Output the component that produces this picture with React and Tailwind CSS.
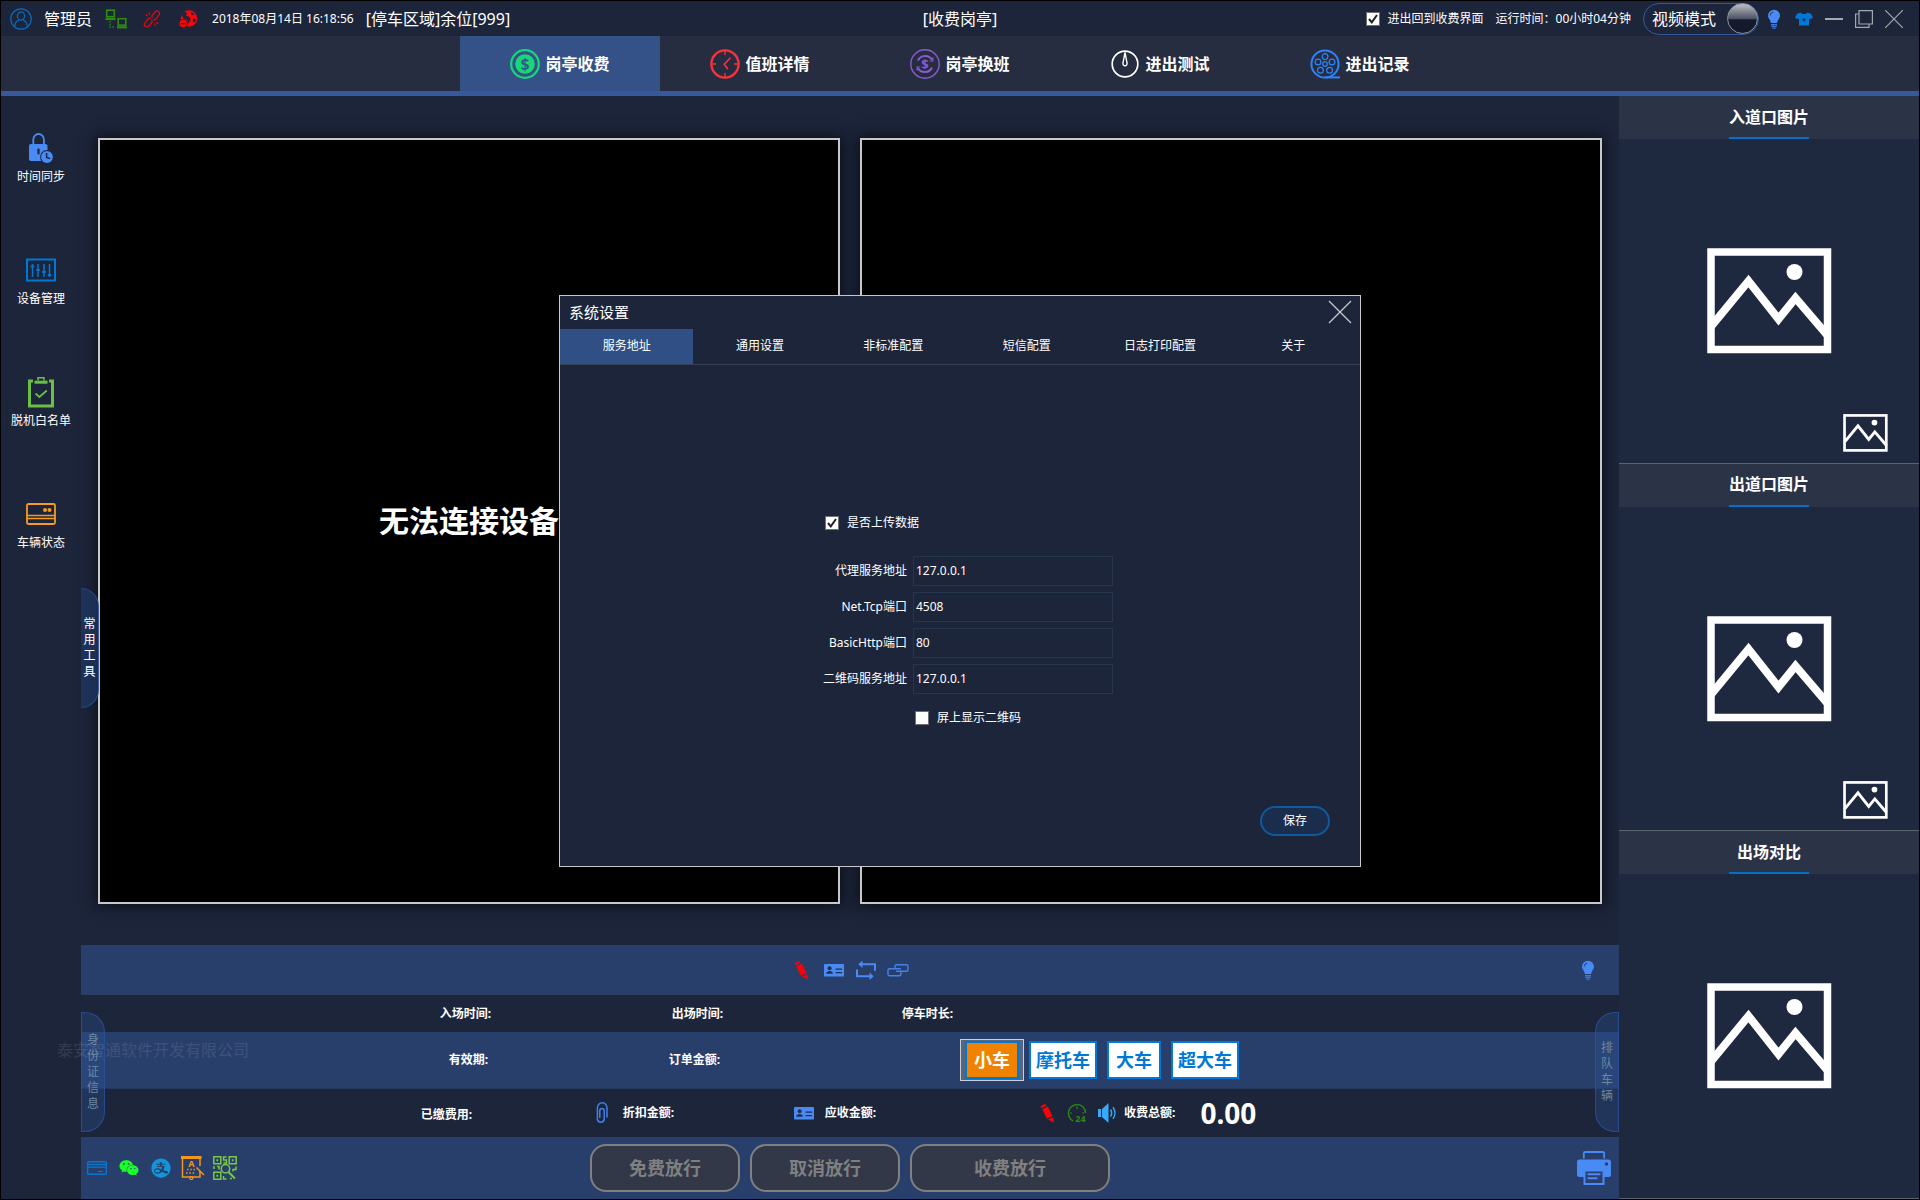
import { useState } from 'react';
import { AiFillAlipayCircle } from 'react-icons/ai';
import { FaWeixin } from 'react-icons/fa';

const NAV_ITEMS = [
  { label: '岗亭收费', icon: CoinIcon },
  { label: '值班详情', icon: ClockIcon },
  { label: '岗亭换班', icon: ShiftIcon },
  { label: '进出测试', icon: GaugeIcon },
  { label: '进出记录', icon: ReelIcon },
];

const TOOLS = [
  { label: '时间同步', icon: LockClockIcon },
  { label: '设备管理', icon: SlidersIcon },
  { label: '脱机白名单', icon: ClipboardIcon },
  { label: '车辆状态', icon: ServerIcon },
];

const CAR_TYPES = ['小车', '摩托车', '大车', '超大车'];

const SETTING_TABS = ['服务地址', '通用设置', '非标准配置', '短信配置', '日志打印配置', '关于'];

const FIELDS = [
  { id: 'proxy', label: '代理服务地址', value: '127.0.0.1' },
  { id: 'tcp', label: 'Net.Tcp端口', value: '4508' },
  { id: 'http', label: 'BasicHttp端口', value: '80' },
  { id: 'qrcode', label: '二维码服务地址', value: '127.0.0.1' },
];

/* ---------- Icons ---------- */

function UserIcon() {
  return (
    <svg viewBox="0 0 22 22" className="size-[22px]" fill="none" stroke="#0d6ab8" strokeWidth="1.2">
      <circle cx="11" cy="11" r="10.2" />
      <ellipse cx="11" cy="8" rx="3.6" ry="4.2" />
      <path d="M4.8 18.5c0-4 2-5.6 4.4-6.6M17.2 18.5c0-4-2-5.6-4.4-6.6" />
    </svg>
  );
}

function NetworkIcon() {
  return (
    <svg viewBox="0 0 24 20" className="h-5 w-6" fill="none" stroke="#2f8a10" strokeWidth="1.6">
      <rect x="2.7" y="1.2" width="7.6" height="6.500" />
      <path d="M1.500 10h10" strokeWidth="2.200" />
      <rect x="14.2" y="9.700" width="7.6" height="6.500" />
      <path d="M13 18.300h10" strokeWidth="2.200" />
      <path d="M6 12v6h5" strokeDasharray="1.4 1.4" strokeWidth="1.300" />
    </svg>
  );
}

function BrokenLinkIcon() {
  return (
    <svg viewBox="0 0 24 20" className="h-5 w-6" fill="none" stroke="#e8040c" strokeWidth="1.3" strokeLinecap="round">
      <path d="M12.500 8.500l-.8-1.500 3.400-4a2.500 2.500 0 0 1 3.900 3.200L16 10a2.400 2.400 0 0 1-2.400.6" />
      <path d="M11.500 11.500l.8 1.500-3.400 4a2.500 2.500 0 0 1-3.900-3.200L8 10a2.400 2.400 0 0 1 2.400-.6" />
      <path d="M7.300 6.700L6 5.600M9.400 5.400L9 4M16.500 13.500l1.500 1M14.800 15l.3 1.300" />
    </svg>
  );
}

function GlobeIcon() {
  return (
    <svg viewBox="0 0 24 20" className="h-5 w-6">
      <circle cx="13" cy="9.5" r="8.3" fill="#fb0505" />
      <path d="M8 2.5l3 1.3-1 3 3 .8 1.6 3-2 3.8-1.5-3.6-3.6-1.2L5.6 6zM15.5 3l3 2.2-2.4 1-1.4-1.4zM17.5 9.2l2.7 1.5-2 3-1.6-1.6z" fill="#1d253a" />
      <circle cx="7.2" cy="14.6" r="4.6" fill="#1d253a" />
      <circle cx="7.2" cy="14.6" r="3.8" fill="#fb0505" />
      <path d="M4.8 14.6h4.8" stroke="#1d253a" strokeWidth="1.3" />
    </svg>
  );
}

function CoinIcon() {
  return (
    <svg viewBox="0 0 30 30" className="size-[30px]">
      <circle cx="15" cy="15" r="13.8" fill="none" stroke="#18d777" strokeWidth="2.2" />
      <circle cx="15" cy="15" r="9.8" fill="#18d777" />
      <text x="15" y="20.600" textAnchor="middle" fontSize="16" fontWeight="600" fill="#36538a">$</text>
    </svg>
  );
}

function ClockIcon() {
  return (
    <svg viewBox="0 0 30 30" className="size-[30px]" fill="none" stroke="#f9313b">
      <circle cx="15" cy="15" r="13.6" strokeWidth="2.4" />
      <path d="M15 2v4M15 24v4M2 15h4M24 15h4" strokeWidth="1.4" />
      <path d="M20.5 8.8L14.2 15.2l3.6 4.8" strokeWidth="1.6" />
    </svg>
  );
}

function ShiftIcon() {
  return (
    <svg viewBox="0 0 30 30" className="size-[30px]" fill="none" stroke="#8a5bd0">
      <circle cx="15" cy="15" r="14.2" strokeWidth="1.4" />
      <path d="M8 11.500a8 8 0 0 1 14-.8M22 18.500a8 8 0 0 1-14 .8" strokeWidth="2" />
      <path d="M22.800 8.500v3.500h-3M7.200 21.500V18h3" strokeWidth="1.200" />
      <text x="15" y="19.600" textAnchor="middle" fontSize="13" fontWeight="700" fill="#8a5bd0" stroke="none">$</text>
    </svg>
  );
}

function GaugeIcon() {
  return (
    <svg viewBox="0 0 30 30" className="size-[30px]" fill="none" stroke="#fff">
      <circle cx="15" cy="15" r="12.8" strokeWidth="1.7" />
      <path d="M15 3.500l-2 10.300a2.100 2.300 0 1 0 4 0z" strokeWidth="1.4" />
    </svg>
  );
}

function ReelIcon() {
  return (
    <svg viewBox="0 0 30 30" className="size-[30px]" fill="none" stroke="#2d84fb">
      <circle cx="15" cy="15" r="13.600" strokeWidth="2" />
      <path d="M15 28.400h15" strokeWidth="2" />
      <g strokeWidth="1.200">
        <circle cx="15" cy="7.600" r="2.900" />
        <circle cx="22" cy="13" r="2.900" />
        <circle cx="19.600" cy="21.200" r="2.900" />
        <circle cx="10.400" cy="21.200" r="2.900" />
        <circle cx="8" cy="13" r="2.900" />
        <circle cx="15" cy="15" r="2.300" />
      </g>
    </svg>
  );
}

function BulbIcon() {
  return (
    <svg viewBox="0 0 14 20" className="h-5 w-3.5">
      <path d="M7 .8a6 6 0 0 0-6 6c0 2.500 2.300 4 3 7.200h6c.7-3.200 3-4.700 3-7.200a6 6 0 0 0-6-6z" fill="#4a8af5" />
      <path d="M3.200 6.500a4 4 0 0 1 3-3.500" stroke="#243a66" strokeWidth="1" fill="none" />
      <path d="M4 15.600h6M4.200 17.400h5.600M5.300 19.200h3.400" stroke="#3b78de" strokeWidth="1.200" />
    </svg>
  );
}

function ShirtIcon() {
  return (
    <svg viewBox="0 0 18 14" className="h-3.5 w-[18px]">
      <path d="M5.500.5c1.500 2 5.500 2 7 0l3.500 1.300L18 5.800l-3.300 1.500L14 6.400V13.500H4V6.400l-.7.900L0 5.800l2-4z" fill="#0078d7" />
      <path d="M7.300 7.800h3.400M9 6.100v3.400" stroke="#1d253a" strokeWidth="1.100" />
    </svg>
  );
}

function LockClockIcon() {
  return (
    <svg viewBox="0 0 24 30" className="h-[30px] w-6">
      <path d="M4.300 12V6.800a5.300 5.800 0 0 1 10.600 0V12" fill="none" stroke="#4a8af5" strokeWidth="1.800" />
      <rect x="0" y="11" width="18.500" height="17" rx="2" fill="#4a8af5" />
      <path d="M9.500 16.500v4" stroke="#1d253a" strokeWidth="2.200" strokeLinecap="round" />
      <ellipse cx="18" cy="24" rx="6.900" ry="6.900" fill="#1d253a" />
      <ellipse cx="18" cy="24" rx="5.900" ry="5.900" fill="#4a8af5" />
      <path d="M17.600 20v4.400l3.600 1.200" fill="none" stroke="#1d253a" strokeWidth="1.500" />
    </svg>
  );
}

function SlidersIcon() {
  return (
    <svg viewBox="0 0 30 24" className="h-6 w-[30px]" fill="none" stroke="#0078d7">
      <rect x="1" y="1.500" width="28" height="21" strokeWidth="2" />
      <path d="M6.500 6v13M12 6v13M18 6v13M23.500 6v13" strokeWidth="1.500" />
      <path d="M4.700 8.500h3.600M10.200 12h3.600M16.200 14h3.600M21.700 17h3.600" strokeWidth="2.200" />
    </svg>
  );
}

function ClipboardIcon() {
  return (
    <svg viewBox="0 0 26 32" className="h-8 w-[26px]" fill="none" stroke="#6cbf45">
      <path d="M5 5H1.500V30H24.500V5H21" strokeWidth="3" />
      <path d="M6.500 6.200h13" strokeWidth="3" />
      <path d="M10 4.500V1.800h6v2.700" strokeWidth="1.500" />
      <path d="M7.500 17.500l3.800 3.500 7.500-6.500" strokeWidth="1.700" />
    </svg>
  );
}

function ServerIcon() {
  return (
    <svg viewBox="0 0 30 22" className="h-[22px] w-[30px]" fill="none" stroke="#f79a20">
      <rect x="1" y="1" width="28" height="20" rx="1.500" strokeWidth="1.800" />
      <path d="M1 12.400h28M1 15.600h28" strokeWidth="1.500" />
      <circle cx="19" cy="7" r="2" fill="#f79a20" stroke="none" />
      <circle cx="23.500" cy="7" r="2" fill="#f79a20" stroke="none" />
    </svg>
  );
}

function PictureIcon({ className }) {
  return (
    <svg viewBox="0 0 125 106" className={className} fill="none" stroke="#fff">
      <rect x="4" y="4" width="116.500" height="97.500" strokeWidth="7.500" />
      <path d="M4 78.500L41.500 33l30 38 17-21L121 88" strokeWidth="8" />
      <circle cx="87.500" cy="24" r="8" fill="#fff" stroke="none" />
    </svg>
  );
}

function PencilIcon() {
  return (
    <svg viewBox="0 0 24 20" className="h-5 w-6" fill="#fc0004">
      <path d="M4.500 3.200L9.300.8l1 2L5.600 5.200z" />
      <path d="M6.200 6.300l5.600-2.800 4.700 9.400-5.600 2.800z" />
      <path d="M12 16.600l5.300-2.400.6 5.300z" />
    </svg>
  );
}

function IdCardIcon() {
  return (
    <svg viewBox="0 0 24 20" className="h-5 w-6">
      <rect x="2" y="4" width="20" height="12.500" rx=".8" fill="#4a8af5" />
      <circle cx="7.600" cy="8.200" r="2" fill="#20304f" />
      <path d="M4.300 13.700c0-2 1.500-2.800 3.300-2.800s3.300.8 3.300 2.800z" fill="#20304f" />
      <path d="M13.500 9.200h6.700M13.500 12.700h6.700" stroke="#20304f" strokeWidth="1.300" />
    </svg>
  );
}

function SwapIcon() {
  return (
    <svg viewBox="0 0 24 20" className="h-5 w-6" fill="none" stroke="#4a8af5" strokeWidth="2">
      <path d="M7 4.200h14v6.500M17 16.300H3V9.500" />
      <path d="M8.500.5v7.400L4.300 4.200zM15.500 12.600V20l4.200-3.700z" fill="#4a8af5" stroke="none" />
    </svg>
  );
}

function ChainIcon() {
  return (
    <svg viewBox="0 0 24 20" className="h-5 w-6" fill="none" stroke="#4583ea" strokeWidth="1.400">
      <path d="M9 8.500V6.200A1.500 1.500 0 0 1 10.500 4.700h10A1.500 1.500 0 0 1 22 6.200v3.600a1.500 1.500 0 0 1-1.500 1.500H10" />
      <path d="M15 11.500v2.800a1.500 1.500 0 0 1-1.500 1.500h-10A1.500 1.500 0 0 1 2 14.300v-4a1.500 1.500 0 0 1 1.500-1.500H15" />
    </svg>
  );
}

function PaperclipIcon() {
  return (
    <svg viewBox="0 0 12 22" className="h-[22px] w-3" fill="none" stroke="#3f80ee" strokeWidth="1.500">
      <path d="M3.800 16V9a2.200 2.400 0 0 1 4.400 0v8.500a3.500 3.500 0 0 1-6.800 0V6a4.600 5 0 0 1 9.600 0v9.500" />
    </svg>
  );
}

function Clock24Icon() {
  return (
    <svg viewBox="0 0 24 20" className="h-5 w-6" fill="none" stroke="#2e8a12" strokeWidth="1.400">
      <path d="M8 17.800A8.600 8.600 0 1 1 20.600 10" />
      <path d="M12 3.500v2.500M5 10h2M17 10h2" strokeWidth="1.100" />
      <text x="15.500" y="18.500" textAnchor="middle" fontSize="9" fontWeight="700" fill="#2e8a12" stroke="none">24</text>
    </svg>
  );
}

function SpeakerIcon() {
  return (
    <svg viewBox="0 0 18 20" className="h-5 w-[18px]">
      <path d="M0 6h3v8H0zM4 6l6.500-6v20L4 14z" fill="#38a9fb" />
      <path d="M12.500 6.500c1.300 2 1.300 5 0 7M15 4.200c2.500 3.400 2.500 8.200 0 11.600" fill="none" stroke="#38a9fb" strokeWidth="1.500" />
    </svg>
  );
}

function BankCardIcon() {
  return (
    <svg viewBox="0 0 20 14" className="h-3.5 w-5" fill="none" stroke="#0b74ce">
      <rect x=".7" y=".7" width="18.600" height="12.600" rx="1" strokeWidth="1.400" />
      <path d="M1 3.500h18M1 6.200h18" strokeWidth="1.300" />
      <path d="M11 10.500h5" strokeWidth="1.200" />
    </svg>
  );
}

function BoardIcon() {
  return (
    <svg viewBox="0 0 24 24" className="size-6" fill="none" stroke="#f4971f">
      <path d="M0 1.500h20.500" strokeWidth="3" />
      <path d="M1.500 3v18h17.500v-6M19 3v7" strokeWidth="1.500" />
      <path d="M15.500 11.500l7.500 7.500" strokeWidth="1.500" />
      <path d="M6 13.500h8M5 17h9" strokeWidth="1.500" strokeDasharray="1.500 1.800" />
      <circle cx="10.300" cy="22" r="1.500" strokeWidth="1.200" />
      <text x="10.300" y="11.300" textAnchor="middle" fontSize="9" fontWeight="700" fill="#f4971f" stroke="none">A</text>
    </svg>
  );
}

function QrIcon() {
  return (
    <svg viewBox="0 0 24 24" className="size-6" fill="none" stroke="#7ac943" strokeWidth="1.500">
      <path d="M.8.8h7v7h-7zM16.200.8h7v7h-7zM.8 16.200h7v7h-7z" />
      <path d="M3.400 4.300h1.800M18.800 4.300h1.800M3.400 19.700h1.800" strokeWidth="2" />
      <path d="M13.500 1h-3v3h3v3h-3M1 10v3M4 10.500h2v3M23 10.500v3h-3v2M10.500 20v3h3M17 22.500h2" />
      <circle cx="12.500" cy="12.800" r="4.200" />
      <path d="M15.500 16l6.500 6.500" strokeWidth="2" />
    </svg>
  );
}

function PrinterIcon() {
  return (
    <svg viewBox="0 0 34 34" className="size-[34px]">
      <path d="M6.800 7.500V2.500A1.500 1.500 0 0 1 8.300 1h17.400a1.500 1.500 0 0 1 1.500 1.500v5" fill="none" stroke="#4a8af5" strokeWidth="1.800" />
      <rect x="0" y="8.500" width="34" height="17.500" rx="2.500" fill="#4a8af5" />
      <circle cx="29.500" cy="13" r="1.700" fill="#283e6b" />
      <path d="M7.500 19.500h19V33h-19z" fill="#283e6b" stroke="#4a8af5" strokeWidth="2" />
      <path d="M10.500 23.300h13M10.500 27.300h10" stroke="#4a8af5" strokeWidth="2" />
    </svg>
  );
}

/* ---------- Shared parts ---------- */

function CheckBox({ id, label, defaultChecked }) {
  return (
    <label htmlFor={id} className="flex items-center gap-2 text-xs">
      <span className="relative size-3.5">
        <input
          id={id}
          type="checkbox"
          defaultChecked={defaultChecked}
          className="peer block size-3.5 appearance-none border border-[#707070] bg-white"
        />
        <svg
          viewBox="0 0 14 14"
          className="pointer-events-none absolute inset-0 size-3.5 opacity-0 peer-checked:opacity-100"
          fill="none"
          stroke="#212121"
          strokeWidth="2"
        >
          <path d="M3 7l2.800 3.300L11 3" />
        </svg>
      </span>
      {label}
    </label>
  );
}

function IconButton({ label, children }) {
  return (
    <button aria-label={label} className="flex h-6 w-6 items-center justify-center">
      {children}
    </button>
  );
}

function FieldLabel({ children }) {
  return <span className="text-xs font-bold">{children}</span>;
}

/* ---------- Page sections ---------- */

function TitleBar() {
  const controls = 'flex h-full w-[30px] items-center justify-center';

  return (
    <header className="grid h-[35px] grid-cols-[1fr_auto_1fr] items-center">
      <div className="flex items-center gap-3 pl-[9px]">
        <UserIcon />
        <span>管理员</span>
        <NetworkIcon />
        <BrokenLinkIcon />
        <GlobeIcon />
        <span className="text-xs">2018年08月14日 16:18:56</span>
        <span>[停车区域]余位[999]</span>
      </div>
      <h1>[收费岗亭]</h1>
      <div className="flex h-full items-center justify-end pr-[10px]">
        <CheckBox id="back" label="进出回到收费界面" defaultChecked />
        <span className="mx-3 text-xs">运行时间：00小时04分钟</span>
        <button
          role="switch"
          aria-checked="true"
          className="flex h-8 w-[116px] items-center justify-between rounded-full border border-[#35599c] pl-2"
        >
          视频模式
          <span className="size-[31px] rounded-full border border-[#8d93a0] bg-linear-to-b from-[#b4b7be] from-5% via-[#4f5566] via-50% to-[#141a2b] to-55%" />
        </button>
        <button aria-label="提示" className={controls}><BulbIcon /></button>
        <button aria-label="皮肤" className={controls}><ShirtIcon /></button>
        <button aria-label="最小化" className={controls}>
          <svg viewBox="0 0 18 18" className="size-[18px]" stroke="#a4a8b0" strokeWidth="2"><path d="M0 9h18" /></svg>
        </button>
        <button aria-label="还原" className={controls}>
          <svg viewBox="0 0 18 18" className="size-[18px]" fill="none" stroke="#a4a8b0" strokeWidth="1.200">
            <path d="M4 .6h13.400V14H4zM4 4H.6v13.400H14V14" />
          </svg>
        </button>
        <button aria-label="关闭" className={controls}>
          <svg viewBox="0 0 18 18" className="size-[18px]" stroke="#a4a8b0" strokeWidth="1.200"><path d="M0 0l18 18M18 0L0 18" /></svg>
        </button>
      </div>
    </header>
  );
}

function MainNav() {
  const [active, setActive] = useState(0);

  return (
    <nav className="flex justify-center border-b-[5px] border-[#35599c] bg-[#272d41]">
      {NAV_ITEMS.map(({ label, icon: Icon }, i) => (
        <button
          key={label}
          onClick={() => setActive(i)}
          className={`flex h-[55px] w-[200px] items-center justify-center gap-[5px] font-bold ${i === active ? 'bg-[#345188]' : ''}`}
        >
          <Icon />
          {label}
        </button>
      ))}
    </nav>
  );
}

function ToolBar() {
  return (
    <aside className="relative w-20 shrink-0 pt-9">
      <div className="flex flex-col gap-[67px]">
        {TOOLS.map(({ label, icon: Icon }) => (
          <button key={label} className="flex flex-col items-center gap-[3px] text-xs leading-5">
            <span className="flex h-8 items-center"><Icon /></span>
            {label}
          </button>
        ))}
      </div>
      {/* Drawer handle, hangs over the video area */}
      <button className="absolute top-[492px] left-full z-10 flex h-[120px] w-[18px] items-center justify-center rounded-r-full border border-l-0 border-[#2a5298]/70 bg-[#1f3c70]/60 text-xs leading-4">
        <span className="w-3 break-all">常用工具</span>
      </button>
    </aside>
  );
}

function VideoArea() {
  const box = 'flex flex-1 items-center justify-center border-2 border-[#c8c8c8] bg-black text-3xl font-bold shadow-[0_0_14px_2px_#0b0f1a]';

  return (
    <div className="flex flex-1 gap-5 px-[17px] pt-[42px] pb-[41px]">
      <div className={box}>无法连接设备</div>
      <div className={box}>无法连接设备</div>
    </div>
  );
}

function SideHandle({ text, className }) {
  return (
    <button
      className={`absolute top-[67px] flex h-[120px] w-6 items-center justify-center border border-[#2a57a6]/70 bg-[#2a5298]/35 text-xs leading-4 text-[#6b8aa3] ${className}`}
    >
      <span className="w-3 break-all">{text}</span>
    </button>
  );
}

function ChargePanel() {
  const [carType, setCarType] = useState(0);
  const action = 'h-12 rounded-2xl border-2 border-[#808080] bg-[#323847] text-lg font-bold text-[#808080]';

  return (
    <section className="relative">
      <div className="grid h-[50px] grid-cols-[1fr_auto_1fr] items-center border-y border-[#2a4063] bg-[#283e6b]">
        <span />
        <div className="flex gap-2">
          <IconButton label="编辑"><PencilIcon /></IconButton>
          <IconButton label="证件"><IdCardIcon /></IconButton>
          <IconButton label="切换"><SwapIcon /></IconButton>
          <IconButton label="关联"><ChainIcon /></IconButton>
        </div>
        <div className="flex justify-end pr-[19px]">
          <IconButton label="提示"><BulbIcon /></IconButton>
        </div>
      </div>

      <div className="grid h-[37px] grid-cols-[410fr_232fr_230fr_666fr] items-center text-right">
        <FieldLabel>入场时间:</FieldLabel>
        <FieldLabel>出场时间:</FieldLabel>
        <FieldLabel>停车时长:</FieldLabel>
      </div>

      <div className="grid h-[57px] grid-cols-[407fr_232fr_240fr_659fr] items-center border-b border-[#24365a] bg-[#283e6b] text-right">
        <FieldLabel>有效期:</FieldLabel>
        <FieldLabel>订单金额:</FieldLabel>
        <span />
        <div className="flex items-center gap-[5px]">
          {CAR_TYPES.map((name, i) => (
            <span
              key={name}
              className={i === carType ? 'border border-[#c8ccd4] bg-[#566580] px-1 py-px' : 'pr-[5px]'}
            >
              <button
                onClick={() => setCarType(i)}
                className={`block h-[38px] min-w-[54px] border-2 border-[#0078d7] px-[5px] text-lg leading-none font-bold ${
                  i === carType ? 'bg-[#f08200] text-white' : 'bg-white text-[#0078d7]'
                }`}
              >
                {name}
              </button>
            </span>
          ))}
        </div>
      </div>

      <div className="grid h-12 grid-cols-[391fr_202fr_202fr_743fr] items-center">
        <span className="text-right"><FieldLabel>已缴费用:</FieldLabel></span>
        <span className="flex items-center justify-end gap-[15px]">
          <PaperclipIcon />
          <FieldLabel>折扣金额:</FieldLabel>
        </span>
        <span className="flex items-center justify-end gap-[9px]">
          <IdCardIcon />
          <FieldLabel>应收金额:</FieldLabel>
        </span>
        <span className="flex items-center gap-[5px] pl-40">
          <PencilIcon />
          <Clock24Icon />
          <span className="flex items-center gap-2 pl-1">
            <SpeakerIcon />
            <FieldLabel>收费总额:</FieldLabel>
          </span>
          <output className="pl-5 text-[28px] leading-8 font-bold">0.00</output>
        </span>
      </div>

      <div className="grid h-[62px] grid-cols-[1fr_auto_1fr] items-center bg-[#283e6b]">
        <div className="flex items-center gap-2 pl-1">
          <IconButton label="银行卡"><BankCardIcon /></IconButton>
          <IconButton label="微信"><FaWeixin className="size-5 text-[#1aff2c]" /></IconButton>
          <IconButton label="支付宝"><AiFillAlipayCircle className="size-[22px] text-[#1296db]" /></IconButton>
          <IconButton label="公告"><BoardIcon /></IconButton>
          <IconButton label="二维码"><QrIcon /></IconButton>
        </div>
        <div className="flex gap-[10px]">
          <button disabled className={`${action} w-[150px]`}>免费放行</button>
          <button disabled className={`${action} w-[150px]`}>取消放行</button>
          <button disabled className={`${action} w-[200px]`}>收费放行</button>
        </div>
        <div className="flex justify-end pr-2">
          <button aria-label="打印"><PrinterIcon /></button>
        </div>
      </div>

      <SideHandle text="身份证信息" className="left-0 rounded-r-[20px]" />
      <SideHandle text="排队车辆" className="right-0 rounded-l-[20px]" />
      {/* Watermark */}
      <span className="pointer-events-none absolute top-[93px] -left-6 text-base leading-6 whitespace-nowrap text-white/10">
        泰安智通软件开发有限公司
      </span>
    </section>
  );
}

function PicturePanel({ title, thumb }) {
  return (
    <section className="flex flex-1 flex-col border-b border-[#5c6270]">
      <h2 className="flex h-[43px] justify-center bg-[#2b3347] font-bold">
        <span className="flex w-20 items-center justify-center border-b-2 border-[#0072c9]">{title}</span>
      </h2>
      <div className="relative flex flex-1 items-center justify-center">
        <PictureIcon className="h-[106px] w-[125px]" />
        {thumb && <PictureIcon className="absolute right-[31px] bottom-[11px] h-[38px] w-[45px]" />}
      </div>
    </section>
  );
}

function SettingsDialog() {
  const [tab, setTab] = useState(0);

  return (
    <div className="absolute inset-0 z-20 flex items-center justify-center pb-[39px]">
      <div role="dialog" aria-label="系统设置" className="w-[802px] border border-[#c8c8c8] bg-[#1d253a]">
        <div className="flex h-[33px] items-center justify-between pr-2 pl-[9px] text-[15px]">
          系统设置
          <button aria-label="关闭" className="flex size-6 items-center justify-center">
            <svg viewBox="0 0 24 24" className="size-6" stroke="#c6c9cf" strokeWidth="1.300"><path d="M1 1l22 22M23 1L1 23" /></svg>
          </button>
        </div>
        <div role="tablist" className="grid grid-cols-6 border-b border-[#353e54] text-xs">
          {SETTING_TABS.map((name, i) => (
            <button
              key={name}
              role="tab"
              aria-selected={i === tab}
              onClick={() => setTab(i)}
              className={`h-[35px] ${i === tab ? 'bg-[#2f4f85]' : ''}`}
            >
              {name}
            </button>
          ))}
        </div>
        <form className="pt-[150px] pb-[30px] text-xs">
          <div className="pl-[265px]">
            <CheckBox id="upload" label="是否上传数据" defaultChecked />
          </div>
          <div className="mt-[25px] flex flex-col gap-1.5">
            {FIELDS.map((field) => (
              <div key={field.id} className="flex items-center gap-1.5">
                <label htmlFor={field.id} className="w-[347px] text-right">{field.label}</label>
                <input
                  id={field.id}
                  defaultValue={field.value}
                  className="h-[30px] w-[200px] border border-[#25364e] bg-transparent px-0.5"
                />
              </div>
            ))}
          </div>
          <div className="mt-4 pl-[355px]">
            <CheckBox id="screen" label="屏上显示二维码" />
          </div>
          <div className="mt-20 flex justify-end pr-[30px]">
            <button type="button" className="h-[30px] w-[70px] rounded-full border-2 border-[#105a9d] bg-[#1b2d4c]">
              保存
            </button>
          </div>
        </form>
      </div>
    </div>
  );
}

export default function App() {
  return (
    <div className="relative flex min-h-screen flex-col border border-black bg-[#1d253a] font-['Noto_Sans','Noto_Sans_CJK_SC',sans-serif] text-base text-white">
      <TitleBar />
      <MainNav />
      <main className="flex flex-1">
        <ToolBar />
        <div className="flex flex-1 flex-col">
          <VideoArea />
          <ChargePanel />
        </div>
        <aside className="flex w-[300px] flex-col bg-[#1e283f]">
          <PicturePanel title="入道口图片" thumb />
          <PicturePanel title="出道口图片" thumb />
          <PicturePanel title="出场对比" />
        </aside>
      </main>
      <SettingsDialog />
    </div>
  );
}
